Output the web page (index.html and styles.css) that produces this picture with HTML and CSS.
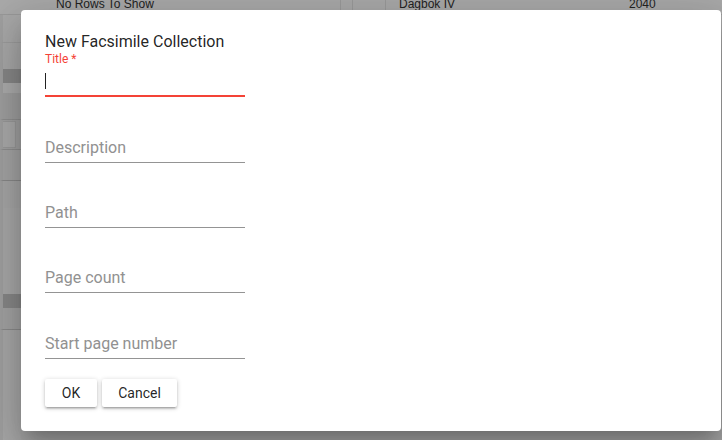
FILE: index.html
```html
<!DOCTYPE html>
<html>
<head>
<meta charset="utf-8">
<link rel="stylesheet" href="styles.css">
</head>
<body>
<div class="page">
  <div class="toprow">
    <div class="cell-left">No Rows To Show</div>
    <div class="sep s1"></div>
    <div class="sep s2"></div>
    <div class="sep s3"></div>
    <div class="cell-name">Dagbok IV</div>
    <div class="cell-num">2040</div>
  </div>
  <div class="leftstrip">
    <div class="ls a"></div>
    <div class="ls b"></div>
    <div class="ls band"></div>
    <div class="ls c"></div>
    <div class="ls d"></div>
    <div class="ls e"><div class="btnish"></div></div>
    <div class="ls f"></div>
    <div class="ls g"></div>
    <div class="ls h"></div>
    <div class="ls band"></div>
    <div class="ls i"></div>
    <div class="ls j"></div>
  </div>
</div>

<div class="dialog">
  <h2 class="dlg-title">New Facsimile Collection</h2>
  <div class="field focused">
    <label class="lbl">Title *</label>
    <div class="row"><span class="caret"></span></div>
  </div>
  <div class="field f2">
    <div class="lblspace"></div>
    <div class="row"><span class="ph">Description</span></div>
  </div>
  <div class="field">
    <div class="lblspace"></div>
    <div class="row"><span class="ph">Path</span></div>
  </div>
  <div class="field">
    <div class="lblspace"></div>
    <div class="row"><span class="ph">Page count</span></div>
  </div>
  <div class="field f5">
    <div class="lblspace"></div>
    <div class="row"><span class="ph">Start page number</span></div>
  </div>
  <div class="actions">
    <button class="btn ok">OK</button>
    <button class="btn cancel">Cancel</button>
  </div>
</div>
</body>
</html>
```
FILE: styles.css
```css
* { box-sizing: border-box; }
html, body { margin: 0; padding: 0; }
body {
  width: 722px;
  height: 440px;
  overflow: hidden;
  background: #a7a7a7;
  font-family: Roboto, "Liberation Sans", Arial, sans-serif;
  position: relative;
}
.page { width: 722px; height: 440px; }
.toprow {
  height: 15px;
  display: flex;
  align-items: flex-start;
  font-family: "Liberation Sans", Arial, sans-serif;
  font-size: 12px;
  line-height: 12px;
  color: #222;
  border-bottom: 1px solid #999;
  background: #a9a9a9;
  overflow: hidden;
}
.cell-left { margin-left: 56px; width: 284px; margin-top: -2px; }
.sep { width: 1px; height: 15px; background: #9a9a9a; }
.s2 { margin-left: 11px; }
.s3 { margin-left: 32px; }
.cell-name { margin-left: 13px; width: 230px; margin-top: -2px; }
.cell-num { margin-top: -2px; }
.leftstrip { width: 21px; display: flex; flex-direction: column; }
.ls { width: 21px; border-left: 3px solid #a0a0a0; background: #a8a8a8; }
.a { height: 28px; border-bottom: 1px solid #9c9c9c; }
.b { height: 26px; }
.band { height: 14px; background: #878787; }
.c { height: 10px; background: #acacac; }
.d { height: 27px; background: #9f9f9f; border-bottom: 1px solid #8f8f8f; }
.e { height: 30px; background: #a2a2a2; border-bottom: 1px solid #8e8e8e; padding-top: 1px; }
.btnish { width: 13px; height: 27px; border: 1px solid #999; border-left: none; background: #aaa; }
.f { height: 31px; background: #a4a4a4; border-bottom: 1px solid #888; }
.g { height: 27px; background: #a6a6a6; }
.h { height: 86px; background: #a8a8a8; }
.i { height: 22px; background: #a3a3a3; border-bottom: 1px solid #8a8a8a; }
.j { height: 120px; background: #a8a8a8; }

.dialog {
  position: absolute;
  left: 21px;
  top: 10px;
  width: 700px;
  height: 421px;
  background: #fff;
  border-radius: 4px;
  padding: 22px 24px 0 24px;
  box-shadow: 0 11px 15px -7px rgba(0,0,0,.2), 0 24px 38px 3px rgba(0,0,0,.14), 0 9px 46px 8px rgba(0,0,0,.12);
}
.dlg-title {
  margin: 0;
  font-weight: 400;
  font-size: 16px;
  line-height: 20px;
  color: rgba(0,0,0,0.87);
}
.field { width: 200px; margin-top: 20px; }
.field.focused { margin-top: 0; }
.field.f2 { margin-top: 21px; }
.field.f5 { margin-top: 21px; }
.lbl {
  display: block;
  height: 14px;
  font-size: 12px;
  line-height: 14px;
  color: #f44336;
}
.lblspace { height: 14px; }
.row {
  height: 31px;
  border-bottom: 1px solid #949494;
  display: flex;
  align-items: center;
}
.focused .row { border-bottom: 2px solid #f44336; }
.caret { width: 1px; height: 16px; background: #222; }
.ph { font-size: 16px; color: #919191; line-height: 20px; margin-top: 1px; }
.actions { display: flex; gap: 5px; margin-top: 20px; }
.btn {
  font-family: inherit;
  font-size: 14px;
  color: rgba(0,0,0,0.87);
  background: #fff;
  border: none;
  border-radius: 2px;
  height: 28px;
  padding: 0;
  box-shadow: 0 1px 5px 0 rgba(0,0,0,.2), 0 2px 2px 0 rgba(0,0,0,.14), 0 3px 1px -2px rgba(0,0,0,.12);
}
.ok { width: 52px; }
.cancel { width: 75px; }
```
